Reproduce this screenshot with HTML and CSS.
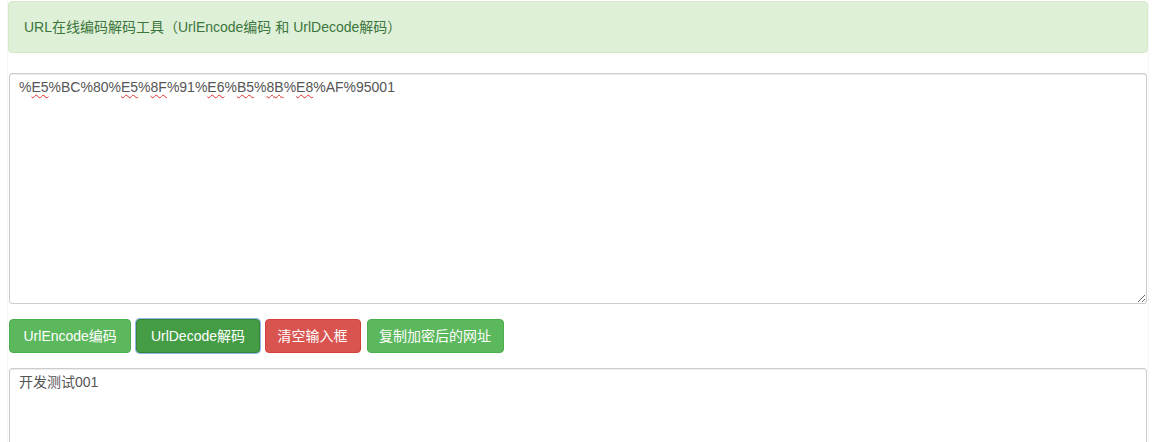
FILE: index.html
```html
<!DOCTYPE html>
<html lang="zh-CN">
<head>
<meta charset="utf-8">
<title>URL在线编码解码工具</title>
<link rel="stylesheet" href="styles.css">
</head>
<body>
<div class="page">
  <div class="alert">URL在线编码解码工具（UrlEncode编码 和 UrlDecode解码）</div>
  <div class="form-control editor">%<span class="sp">E5</span>%BC%80%<span class="sp">E5</span>%<span class="sp">8F</span>%91%<span class="sp">E6</span>%<span class="sp">B5</span>%<span class="sp">8B</span>%<span class="sp">E8</span>%AF%95001</div>
  <div class="actions">
    <button class="btn btn-success btn-en">UrlEncode编码</button>
    <button class="btn btn-success btn-en active">UrlDecode解码</button>
    <button class="btn btn-danger">清空输入框</button>
    <button class="btn btn-success copy">复制加密后的网址</button>
  </div>
  <div class="form-control result">开发测试001</div>
</div>
</body>
</html>
```
FILE: styles.css
```css
* { box-sizing: border-box; }
html, body { margin: 0; padding: 0; background: #fff; }
body {
  font-family: "Liberation Sans", Arial, "Noto Sans CJK SC", sans-serif;
  font-size: 14px;
  line-height: 20px;
  color: #333;
}
.page {
  margin-left: 7px;
  width: 1142px;
  min-height: 442px;
  padding-top: 1px;
  border-left: 1px solid #f6f6f6;
  border-right: 1px solid #f6f6f6;
}
.alert {
  background: #dff0d8;
  border: 1px solid #d6e9c6;
  color: #3c763d;
  border-radius: 4px;
  padding: 15px 15px;
  margin-bottom: 20px;
}
.form-control {
  margin: 0 1px;
  border: 1px solid #ccc;
  border-radius: 3px;
  padding: 3px 9px;
  color: #555;
  box-shadow: inset 0 1px 1px rgba(0,0,0,.075);
  background: #fff;
}
.editor {
  height: 231px;
  overflow: auto;
  resize: vertical;
  margin-bottom: 15px;
}
.sp {
  text-decoration: underline wavy #e0312f;
  text-decoration-thickness: 1px;
  text-underline-offset: 2px;
}
.actions {
  display: flex;
  gap: 4px;
  margin: 0 1px 15px;
}
.btn {
  font-family: inherit;
  font-size: 14px;
  line-height: 20px;
  padding: 6px 12px;
  border: 1px solid transparent;
  border-radius: 4px;
  color: #fff;
  cursor: pointer;
}
.btn-en { padding: 6px 13.5px; }
.btn-success { background: #5cb85c; border-color: #4cae4c; }
.btn-success.active {
  background: #449d44;
  border-color: #398439;
  box-shadow: 0 0 0 1px #8fb7e8;
  margin-left: 1px;
  margin-right: 1px;
}
.btn-danger { background: #d9534f; border-color: #d43f3a; }
.copy { margin-left: 2px; padding: 6px 11.5px; }
.result {
  height: 230px;
}
```
